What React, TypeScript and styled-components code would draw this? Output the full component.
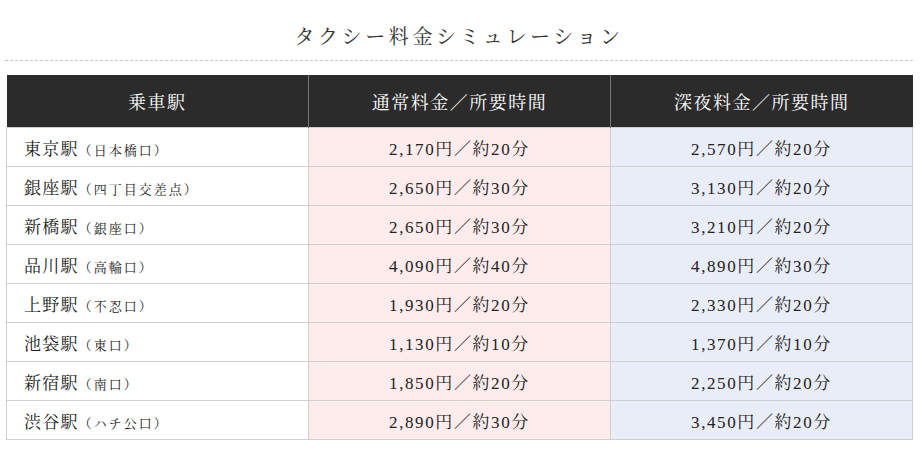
import React from "react";
import styled, { createGlobalStyle } from "styled-components";

const Global = createGlobalStyle`
  html, body { margin: 0; padding: 0; background: #fff; }
  body { font-family: "Liberation Serif", "Noto Serif CJK JP", "Noto Sans CJK JP", serif; color: #222; }
`;

const Page = styled.div`
  width: 921px;
  padding: 20px 8px 0 5px;
  box-sizing: border-box;
`;

const Title = styled.h2`
  margin: 0;
  text-align: center;
  font-size: 20px;
  font-weight: normal;
  letter-spacing: 3.6px;
  line-height: 34px;
  color: #333;
`;

const Divider = styled.div`
  margin-top: 6px;
  border-top: 1px dashed #c8c8c8;
`;

const Table = styled.table`
  margin-top: 14px;
  margin-left: 1px;
  width: 907px;
  border-collapse: collapse;
  table-layout: fixed;
`;

const Th = styled.th`
  background: #2b2b2b;
  color: #fff;
  font-weight: normal;
  font-size: 18px;
  letter-spacing: 1.5px;
  height: 52px;
  padding: 0;
  border-left: 1px solid #777;
  &:first-child { border-left: none; }
`;

const Td = styled.td<{ $tone?: "pink" | "blue" }>`
  height: 38px;
  padding: 0;
  border: 1px solid #cfcfcf;
  font-size: 17px;
  letter-spacing: 1.6px;
  text-align: center;
  background: ${(p) => (p.$tone === "pink" ? "#fdeceb" : p.$tone === "blue" ? "#e9edf7" : "#fff")};
`;

const NameCell = styled(Td)`
  text-align: left;
  padding-left: 17px;
  letter-spacing: 1.2px;
`;

const Small = styled.span`
  font-size: 13px;
  letter-spacing: 2px;
`;

const rows = [
  ["東京駅", "日本橋口", "2,170円／約20分", "2,570円／約20分"],
  ["銀座駅", "四丁目交差点", "2,650円／約30分", "3,130円／約20分"],
  ["新橋駅", "銀座口", "2,650円／約30分", "3,210円／約20分"],
  ["品川駅", "高輪口", "4,090円／約40分", "4,890円／約30分"],
  ["上野駅", "不忍口", "1,930円／約20分", "2,330円／約20分"],
  ["池袋駅", "東口", "1,130円／約10分", "1,370円／約10分"],
  ["新宿駅", "南口", "1,850円／約20分", "2,250円／約20分"],
  ["渋谷駅", "ハチ公口", "2,890円／約30分", "3,450円／約20分"],
];

export default function App() {
  return (
    <>
      <Global />
      <Page>
        <Title>タクシー料金シミュレーション</Title>
        <Divider />
        <Table>
          <thead>
            <tr>
              <Th>乗車駅</Th>
              <Th>通常料金／所要時間</Th>
              <Th>深夜料金／所要時間</Th>
            </tr>
          </thead>
          <tbody>
            {rows.map((r) => (
              <tr key={r[0]}>
                <NameCell>
                  {r[0]}
                  <Small>（{r[1]}）</Small>
                </NameCell>
                <Td $tone="pink">{r[2]}</Td>
                <Td $tone="blue">{r[3]}</Td>
              </tr>
            ))}
          </tbody>
        </Table>
      </Page>
    </>
  );
}
